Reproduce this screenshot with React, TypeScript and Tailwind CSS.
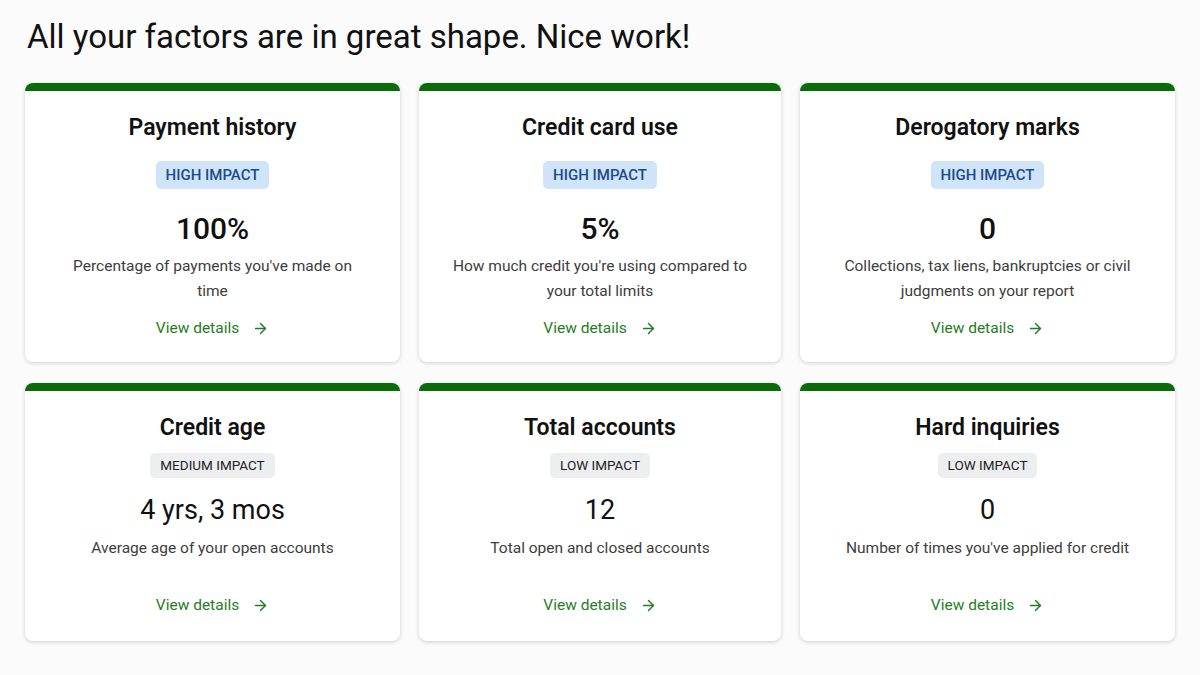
import React from 'react';
import { ArrowRight } from 'lucide-react';

type Factor = {
  title: string;
  impact: 'HIGH IMPACT' | 'MEDIUM IMPACT' | 'LOW IMPACT';
  value: string;
  desc: React.ReactNode;
};

const topRow: Factor[] = [
  { title: 'Payment history', impact: 'HIGH IMPACT', value: '100%', desc: <>Percentage of payments you've made on<br />time</> },
  { title: 'Credit card use', impact: 'HIGH IMPACT', value: '5%', desc: <>How much credit you're using compared to<br />your total limits</> },
  { title: 'Derogatory marks', impact: 'HIGH IMPACT', value: '0', desc: <>Collections, tax liens, bankruptcies or civil<br />judgments on your report</> },
];

const bottomRow: Factor[] = [
  { title: 'Credit age', impact: 'MEDIUM IMPACT', value: '4 yrs, 3 mos', desc: 'Average age of your open accounts' },
  { title: 'Total accounts', impact: 'LOW IMPACT', value: '12', desc: 'Total open and closed accounts' },
  { title: 'Hard inquiries', impact: 'LOW IMPACT', value: '0', desc: "Number of times you've applied for credit" },
];

const ViewDetails: React.FC = () => (
  <a href="#" className="flex items-center gap-[13px] text-[15.5px] text-[#1f7d24]">
    View details
    <ArrowRight size={17} strokeWidth={2} />
  </a>
);

const HighCard: React.FC<{ f: Factor }> = ({ f }) => (
  <div className="flex h-[279px] flex-col items-center overflow-hidden rounded-lg bg-white text-center shadow-[0_1px_4px_rgba(0,0,0,0.18)]">
    <div className="h-[8px] w-full bg-[#0a6b0a]" />
    <h3 className="mt-[23px] text-[23px] font-semibold leading-[28px] text-[#111]">{f.title}</h3>
    <span className="mt-[19px] rounded-[5px] bg-[#cfe3f9] px-[10px] py-[4px] text-[15px] font-medium leading-[20px] text-[#1b4c8a]">
      {f.impact}
    </span>
    <div className="mt-[23px] text-[30px] font-medium leading-[34px] text-[#111]">{f.value}</div>
    <p className="mt-[8px] text-[15.5px] leading-[25px] text-[#3d3d3d]">{f.desc}</p>
    <div className="mt-[13px]">
      <ViewDetails />
    </div>
  </div>
);

const LowCard: React.FC<{ f: Factor }> = ({ f }) => (
  <div className="flex h-[258px] flex-col items-center overflow-hidden rounded-lg bg-white text-center shadow-[0_1px_4px_rgba(0,0,0,0.18)]">
    <div className="h-[8px] w-full bg-[#0a6b0a]" />
    <h3 className="mt-[23px] text-[23px] font-semibold leading-[28px] text-[#111]">{f.title}</h3>
    <span className="mt-[11px] rounded-[5px] bg-[#eceef0] px-[10px] py-[3px] text-[13.5px] leading-[19px] text-[#222]">
      {f.impact}
    </span>
    <div className="mt-[16px] text-[27px] leading-[32px] text-[#111]">{f.value}</div>
    <p className="mt-[10px] text-[15.5px] leading-[25px] text-[#3d3d3d]">{f.desc}</p>
    <div className="mt-[33px]">
      <ViewDetails />
    </div>
  </div>
);

export default function App() {
  return (
    <div
      className="min-h-[675px] w-[1200px] bg-[#fbfbfb] px-[25px] pt-[17px]"
      style={{ fontFamily: 'Roboto, "Liberation Sans", sans-serif' }}
    >
      <h1 className="ml-[2px] text-[33px] leading-[40px] text-[#111]">
        All your factors are in great shape. Nice work!
      </h1>
      <div className="mt-[26px] grid grid-cols-[375px_362px_375px] gap-x-[19px] gap-y-[21px]">
        {topRow.map((f) => (
          <HighCard key={f.title} f={f} />
        ))}
        {bottomRow.map((f) => (
          <LowCard key={f.title} f={f} />
        ))}
      </div>
    </div>
  );
}
